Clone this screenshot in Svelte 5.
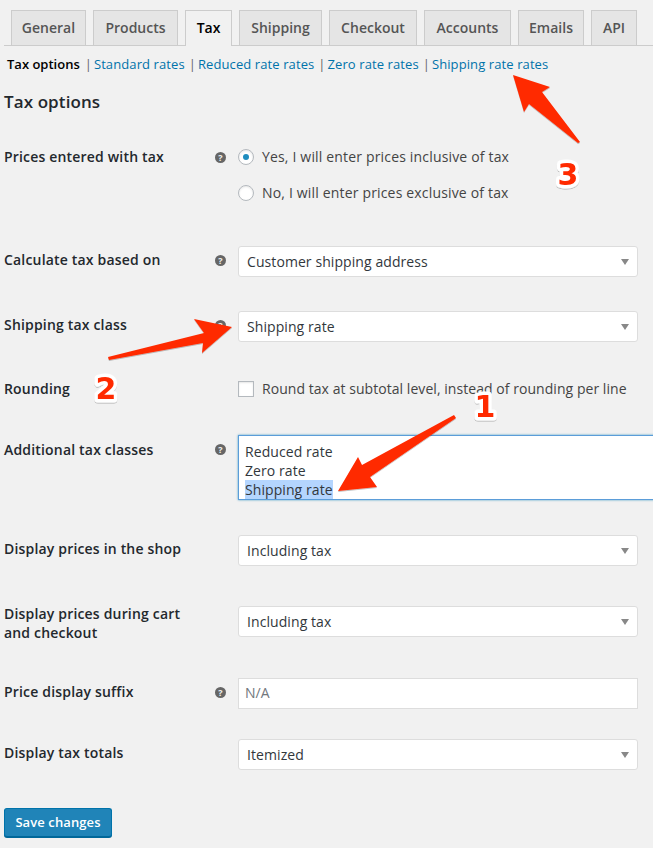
<script>
  // widths measured per tab so the strip lines up
  const tabs = [
    { name: "General", width: 75 },
    { name: "Products", width: 85 },
    { name: "Tax", width: 47 },
    { name: "Shipping", width: 83 },
    { name: "Checkout", width: 88 },
    { name: "Accounts", width: 87 },
    { name: "Emails", width: 66 },
    { name: "API", width: 46 },
  ];
  const sections = ["Standard rates", "Reduced rate rates", "Zero rate rates", "Shipping rate rates"];
</script>

<div class="page">
  <nav class="tabs">
    {#each tabs as tab}
      <a href="#top" class="tab" class:active={tab.name === "Tax"} style="width: {tab.width}px">{tab.name}</a>
    {/each}
  </nav>

  <ul class="subnav">
    <li class="current">Tax options</li>
    {#each sections as section}
      <li><span class="sep">|</span><a href="#top">{section}</a></li>
    {/each}
  </ul>

  <h2>Tax options</h2>

  <div class="row radios-row">
    <div class="label">Prices entered with tax</div>
    <div class="help"><span class="tip">?</span></div>
    <div class="field radios">
      <label class="check"><span class="radio on"></span>Yes, I will enter prices inclusive of tax</label>
      <label class="check"><span class="radio"></span>No, I will enter prices exclusive of tax</label>
    </div>
  </div>

  <div class="row calc">
    <div class="label">Calculate tax based on</div>
    <div class="help"><span class="tip">?</span></div>
    <div class="field"><div class="select">Customer shipping address</div></div>
  </div>

  <div class="row ship">
    <div class="label">Shipping tax class</div>
    <div class="help"><span class="tip">?</span></div>
    <div class="field"><div class="select">Shipping rate</div></div>
  </div>

  <div class="row rounding">
    <div class="label">Rounding</div>
    <div class="help"></div>
    <div class="field">
      <label class="check"><span class="box"></span>Round tax at subtotal level, instead of rounding per line</label>
    </div>
  </div>

  <div class="row additional">
    <div class="label">Additional tax classes</div>
    <div class="help"><span class="tip">?</span></div>
    <div class="field">
      <div class="textarea">
        <div>Reduced rate</div>
        <div>Zero rate</div>
        <div><span class="selected">Shipping rate</span></div>
      </div>
    </div>
  </div>

  <div class="row shop">
    <div class="label">Display prices in the shop</div>
    <div class="help"></div>
    <div class="field"><div class="select">Including tax</div></div>
  </div>

  <div class="row cart">
    <div class="label">Display prices during cart<br />and checkout</div>
    <div class="help"></div>
    <div class="field"><div class="select">Including tax</div></div>
  </div>

  <div class="row suffix">
    <div class="label">Price display suffix</div>
    <div class="help"><span class="tip">?</span></div>
    <div class="field"><div class="input">N/A</div></div>
  </div>

  <div class="row totals">
    <div class="label">Display tax totals</div>
    <div class="help"></div>
    <div class="field"><div class="select">Itemized</div></div>
  </div>

  <button class="save">Save changes</button>

  <svg class="arrows" width="653" height="848" viewBox="0 0 653 848">
    <defs>
      <filter id="soft" x="-10%" y="-10%" width="120%" height="120%">
        <feDropShadow dx="0" dy="1" stdDeviation="0.7" flood-color="#000" flood-opacity="0.25" />
      </filter>
    </defs>
    <g fill="#ff2a00" filter="url(#soft)">
      <path d="M513 75 L550 87 L542 92 L580 142 L578 143 L529 104 L524 112 Z" />
      <path d="M232 327 L194 319 L204 333 L108 357 L109 360 L203 343 L202 353 Z" />
      <path d="M338 491 L358 457 L362 465 L454 415 L456 418 L370 477 L377 487 Z" />
    </g>
    <g class="nums" filter="url(#soft)">
      <text x="485" y="417">1</text>
      <text x="106" y="399">2</text>
      <text x="568" y="185">3</text>
    </g>
  </svg>
</div>

<style>
  :global(body) {
    background: #f1f1f1;
  }

  .page {
    position: relative;
    width: 653px;
    height: 848px;
    overflow: hidden;
    background: #f1f1f1;
    color: #23282d;
    font-family: "Open Sans", "Noto Sans", sans-serif;
    font-size: 14px;
  }

  .tabs {
    display: flex;
    gap: 7px;
    margin-left: 4px;
    padding: 10px 0 0 7px;
    height: 46px;
    box-sizing: border-box;
    border-bottom: 1px solid #ccc;
  }

  .tab {
    box-sizing: border-box;
    height: 35px;
    border: 1px solid #ccc;
    border-bottom: none;
    background: #e5e5e5;
    color: #555;
    font-weight: 600;
    line-height: 34px;
    text-align: center;
    text-decoration: none;
  }

  .tab.active {
    height: 36px;
    background: #f1f1f1;
    color: #000;
  }

  .subnav {
    display: flex;
    margin: 0;
    padding: 0 0 0 7px;
    height: 28px;
    list-style: none;
    font-size: 13px;
    line-height: 37px;
    color: #666;
  }

  .subnav a {
    color: #0073aa;
    text-decoration: none;
    letter-spacing: 0.1px;
  }

  .subnav .current {
    margin-right: 1px;
    color: #000;
    font-weight: 600;
  }

  .sep {
    margin: 0 2px 0 4px;
  }

  h2 {
    margin: 0;
    padding: 16px 0 0 4px;
    font-size: 17px;
    font-weight: 600;
    line-height: 24px;
    letter-spacing: 0.1px;
  }

  .row {
    display: grid;
    grid-template-columns: 210px 24px 1fr;
    padding-left: 4px;
  }

  .label {
    font-weight: 600;
    line-height: 19px;
    letter-spacing: 0.18px;
  }

  .help {
    display: flex;
    align-items: flex-start;
    padding-top: 5px;
  }

  .tip {
    width: 11px;
    height: 11px;
    margin-left: 1px;
    border-radius: 50%;
    background: #666;
    color: #f1f1f1;
    font-size: 9px;
    font-weight: 700;
    line-height: 11px;
    text-align: center;
  }

  .check {
    display: flex;
    align-items: center;
    color: #444;
    line-height: 19px;
    letter-spacing: 0.05px;
  }

  .radios {
    display: flex;
    flex-direction: column;
    gap: 17px;
  }

  .radios .check {
    letter-spacing: 0.17px;
  }

  .radio,
  .box {
    flex: none;
    box-sizing: border-box;
    width: 16px;
    height: 16px;
    margin-right: 8px;
    border: 1px solid #b4b9be;
    background: #fff;
    box-shadow: inset 0 1px 2px rgba(0, 0, 0, 0.1);
  }

  .radio {
    display: flex;
    align-items: center;
    justify-content: center;
    border-radius: 50%;
  }

  .radio.on::after {
    content: "";
    width: 6px;
    height: 6px;
    border-radius: 50%;
    background: #1e8cbe;
  }

  .select,
  .input {
    position: relative;
    box-sizing: border-box;
    width: 400px;
    height: 31px;
    padding: 0 8px;
    border: 1px solid #ddd;
    border-radius: 3px;
    background: #fff;
    color: #32373c;
    line-height: 29px;
    letter-spacing: 0.08px;
  }

  .select::after {
    content: "";
    position: absolute;
    top: 12px;
    right: 8px;
    border-style: solid;
    border-width: 6px 4px 0;
    border-color: #888 transparent transparent;
  }

  .input {
    border-radius: 0;
    color: #72777c;
    padding-left: 6px;
    line-height: 27px;
  }

  .textarea {
    box-sizing: border-box;
    width: 460px;
    height: 65px;
    padding: 6px 6px;
    border: 1px solid #5b9dd9;
    background: #fff;
    box-shadow: 0 0 2px rgba(30, 140, 190, 0.8);
    color: #32373c;
    line-height: 19px;
    letter-spacing: 0.08px;
  }

  .selected {
    background: #b4d5fe;
  }

  .radios-row {
    margin-top: 33px;
    height: 82px;
  }

  .calc {
    margin-top: 17px;
    height: 31px;
  }

  .ship {
    margin-top: 34px;
    height: 31px;
  }

  .rounding {
    margin-top: 37px;
    height: 19px;
  }

  .additional {
    margin-top: 37px;
    height: 65px;
  }

  .shop {
    margin-top: 35px;
    height: 31px;
  }

  .cart {
    margin-top: 40px;
    height: 31px;
  }

  .suffix {
    margin-top: 41px;
    height: 31px;
  }

  .totals {
    margin-top: 30px;
    height: 31px;
  }

  .calc .label,
  .ship .label,
  .shop .label,
  .suffix .label,
  .totals .label {
    margin-top: 4px;
  }

  .additional .label {
    margin-top: 5px;
  }

  .cart .label {
    margin-top: -2px;
  }

  .calc .help,
  .ship .help,
  .suffix .help {
    padding-top: 9px;
  }

  .additional .help {
    padding-top: 9px;
  }

  .save {
    display: block;
    box-sizing: border-box;
    width: 108px;
    height: 29px;
    margin: 38px 0 0 4px;
    padding: 0 0 2px;
    border: 1px solid #0073aa;
    border-bottom-color: #006799;
    border-radius: 3px;
    background: #2084b8;
    box-shadow: 0 1px 0 #006799;
    color: #fff;
    font-family: inherit;
    font-size: 13px;
    font-weight: 600;
    letter-spacing: 0.1px;
  }

  .arrows {
    position: absolute;
    top: 0;
    left: 0;
    pointer-events: none;
  }

  .nums text {
    fill: #ff2a00;
    stroke: #fff;
    stroke-width: 7px;
    stroke-linejoin: round;
    paint-order: stroke fill;
    font-family: "DejaVu Sans", sans-serif;
    font-size: 30px;
    font-weight: 700;
    text-anchor: middle;
  }
</style>
